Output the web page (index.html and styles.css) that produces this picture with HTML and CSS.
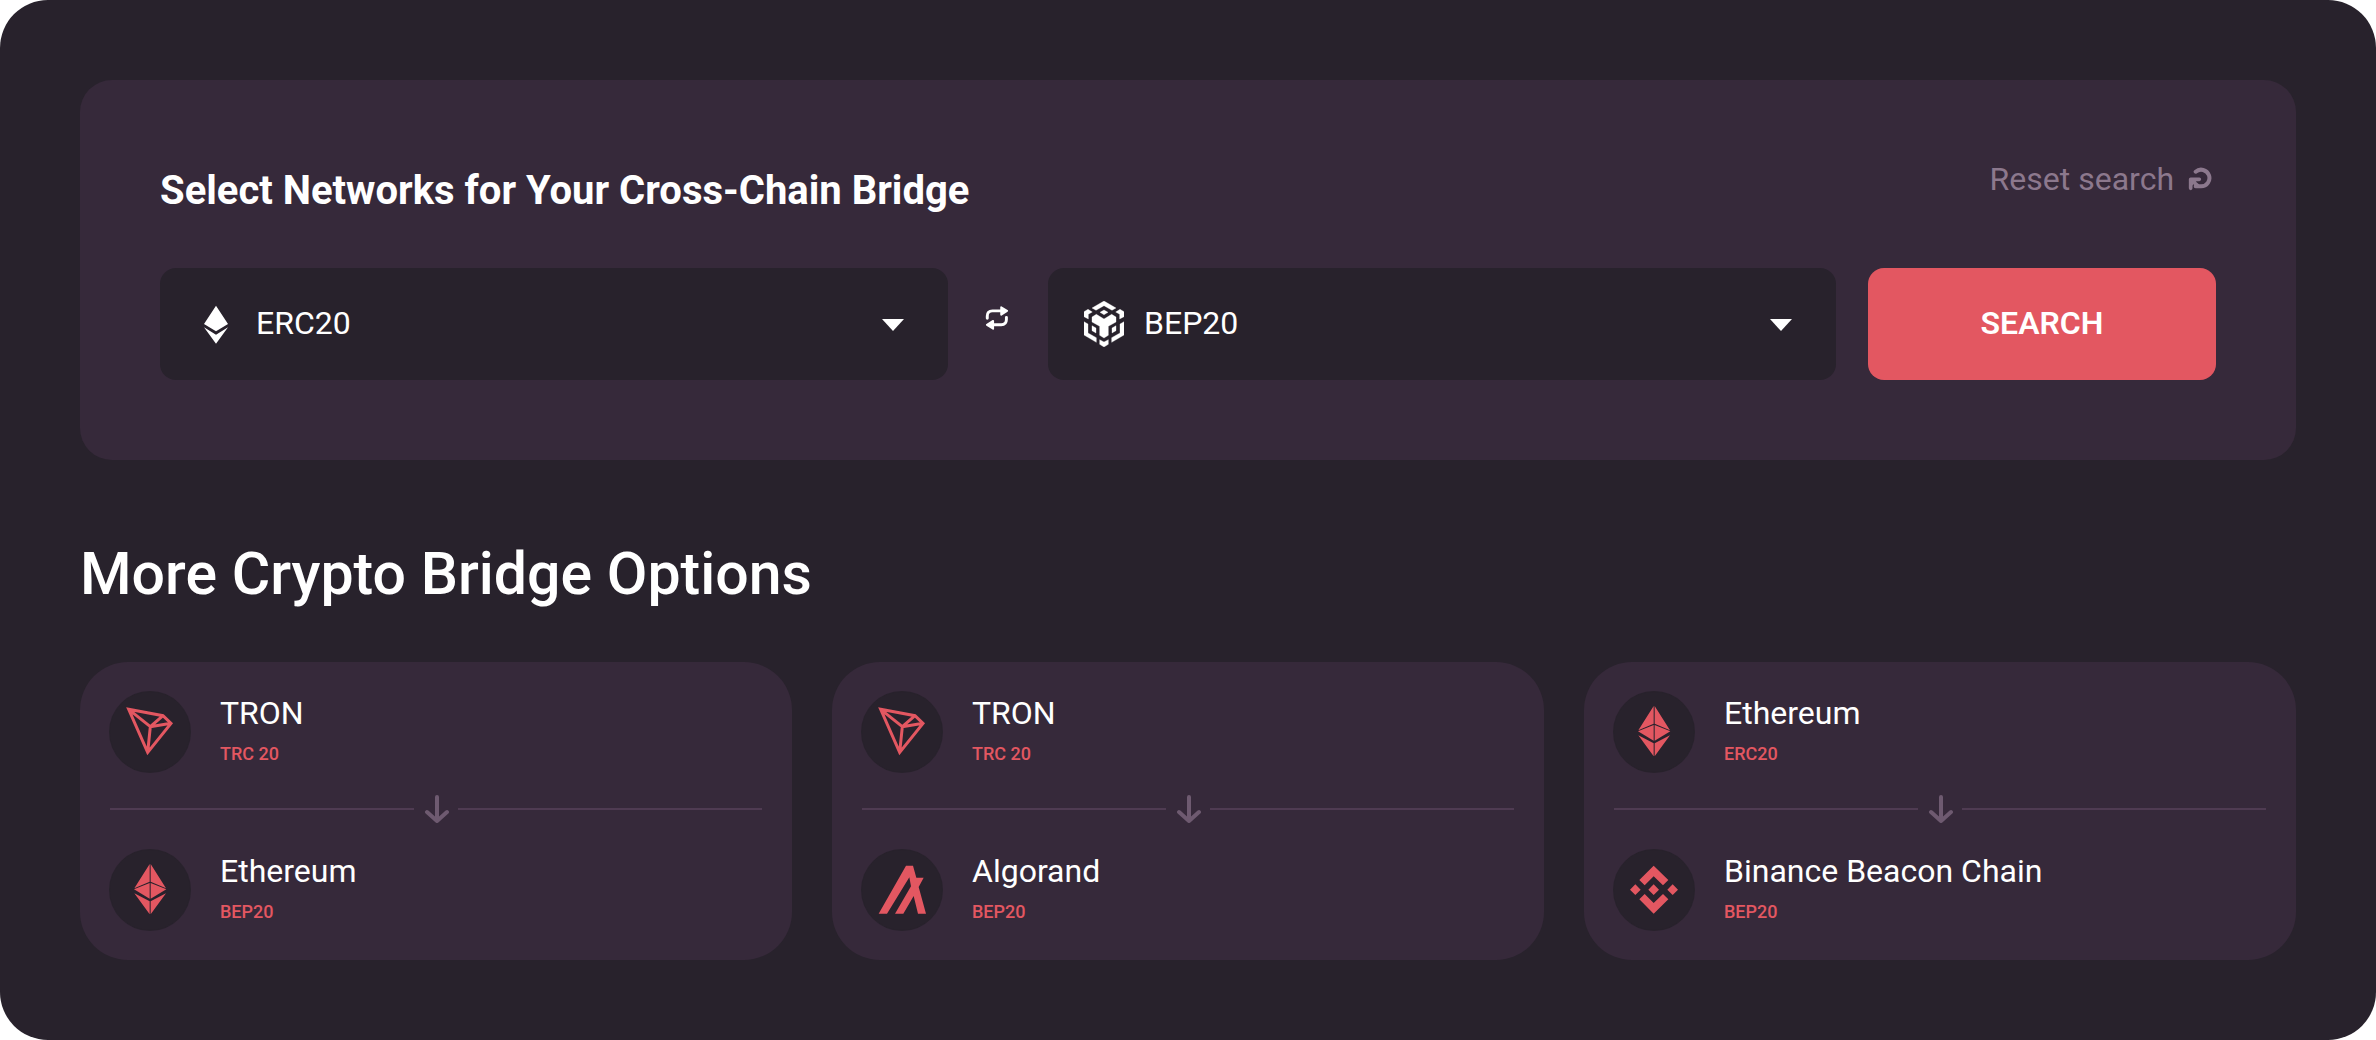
FILE: index.html
```html
<!DOCTYPE html>
<html lang="en">
<head>
<meta charset="utf-8">
<meta name="viewport" content="width=device-width, initial-scale=1">
<title>Cross-Chain Bridge</title>
<link rel="stylesheet" href="styles.css">
</head>
<body>
<svg class="sprite" aria-hidden="true">
  <symbol id="tron" viewBox="150 157 240 240">
    <path d="M206 209 309 228 333 251 263 338ZL271 261 263 338M271 261 333 251M271 261 309 228" fill="none" stroke="currentColor" stroke-width="9"/>
  </symbol>
  <symbol id="ethereum" viewBox="151 630 240 240">
    <path d="M270 672V725L224 745ZM270 729V776L223 748ZM270 784V823L224 760ZM273 672V725L319 745ZM273 729V776L320 748ZM273 784V823L319 760Z" fill="currentColor"/>
  </symbol>
  <symbol id="algorand" viewBox="96 571 240 240">
    <path d="M146 762 228 618H249L259 654H281L266 682 288 762H264L251 709 220 762H195L243 680 238 653 171 762Z" fill="currentColor"/>
  </symbol>
  <symbol id="binance" viewBox="102 61 240 240">
    <path d="M221 108 265 151 249 167 221 140 194 167 178 151ZM221 252 265 209 249 193 221 220 194 193 178 209ZM166 164 182 180 166 196 150 180ZM221 164 237 180 221 196 205 180ZM278 164 294 180 278 196 262 180Z" fill="currentColor"/>
  </symbol>
  <symbol id="arrow-down" viewBox="0 0 28 28">
    <path d="M15 2V26M5 17 15 26 25 17" fill="none" stroke="currentColor" stroke-width="4" stroke-linecap="round" stroke-linejoin="round"/>
  </symbol>
  <symbol id="caret" viewBox="0 0 22 12">
    <path d="M0 0H22L11 12Z" fill="currentColor"/>
  </symbol>
</svg>
<main class="page">
  <form class="panel">
    <div class="panel-head">
      <h1 class="panel-title">Select Networks for Your Cross-Chain Bridge</h1>
      <button class="reset" type="reset">Reset search
        <svg class="reset-icon" viewBox="681 87 72 72" aria-hidden="true">
          <path d="M704 101A25 25 0 1 1 720 145H704" fill="none" stroke="currentColor" stroke-width="12" stroke-linecap="round"/>
          <path d="M689 151V124H715M691 126 710 143" fill="none" stroke="currentColor" stroke-width="11" stroke-linecap="round" stroke-linejoin="round"/>
          <path d="M689 123H712L689 148Z" fill="currentColor"/>
        </svg>
      </button>
    </div>
    <div class="fields">
      <div class="field">
        <svg class="field-icon" viewBox="18 34 120 138" aria-hidden="true">
          <path d="M78 48 114 103 78 125 42 103ZM42 113 78 135 114 113 78 162Z" fill="currentColor"/>
        </svg>
        <select class="field-select" aria-label="From network">
          <option>ERC20</option>
          <option>BEP20</option>
          <option>TRC 20</option>
        </select>
        <svg class="field-caret" aria-hidden="true"><use href="#caret"/></svg>
      </div>
      <button class="swap" type="button" aria-label="Swap networks">
        <svg class="swap-icon" viewBox="376 47 72 74" aria-hidden="true">
          <path d="M382 85V78Q382 62 398 62H425M441 82V89Q441 105 425 105H400" fill="none" stroke="currentColor" stroke-width="9" stroke-linecap="round"/>
          <path d="M425 51 443 62 425 74ZM400 93 381 105 400 117Z" fill="currentColor" stroke="currentColor" stroke-width="6" stroke-linejoin="round"/>
        </svg>
      </button>
      <div class="field">
        <svg class="field-icon" viewBox="672 34 120 138" aria-hidden="true">
          <path d="M732 34 768 55 756 62 732 48 708 62 696 55ZM732 61 744 68 732 75 720 68ZM684 59 697 67 685 74V88L672 81V66ZM780 59 767 67 779 74V88L792 81V66ZM709 74 732 88 755 74 768 82V97L745 110V137L732 145 719 137V110L696 97V82ZM672 96 684 103V130L709 144V158L672 136ZM792 96 780 103V130L755 144V158L792 136ZM696 108 708 115V130L696 123ZM768 108 756 115V130L768 123ZM719 150 732 157 745 150V164L732 172 719 164Z" fill="currentColor" stroke="currentColor" stroke-width="1"/>
        </svg>
        <select class="field-select" aria-label="To network">
          <option>BEP20</option>
          <option>ERC20</option>
          <option>TRC 20</option>
        </select>
        <svg class="field-caret" aria-hidden="true"><use href="#caret"/></svg>
      </div>
      <button class="search" type="submit">SEARCH</button>
    </div>
  </form>

  <h2 class="section-title">More Crypto Bridge Options</h2>

  <div class="cards">
    <article class="card">
      <div class="network">
        <span class="badge"><svg class="badge-icon" aria-hidden="true"><use href="#tron"/></svg></span>
        <div class="label"><span class="name">TRON</span><span class="standard">TRC 20</span></div>
      </div>
      <div class="divider"><svg class="arrow" aria-hidden="true"><use href="#arrow-down"/></svg></div>
      <div class="network">
        <span class="badge"><svg class="badge-icon" aria-hidden="true"><use href="#ethereum"/></svg></span>
        <div class="label"><span class="name">Ethereum</span><span class="standard">BEP20</span></div>
      </div>
    </article>
    <article class="card">
      <div class="network">
        <span class="badge"><svg class="badge-icon" aria-hidden="true"><use href="#tron"/></svg></span>
        <div class="label"><span class="name">TRON</span><span class="standard">TRC 20</span></div>
      </div>
      <div class="divider"><svg class="arrow" aria-hidden="true"><use href="#arrow-down"/></svg></div>
      <div class="network">
        <span class="badge"><svg class="badge-icon" aria-hidden="true"><use href="#algorand"/></svg></span>
        <div class="label"><span class="name">Algorand</span><span class="standard">BEP20</span></div>
      </div>
    </article>
    <article class="card">
      <div class="network">
        <span class="badge"><svg class="badge-icon" aria-hidden="true"><use href="#ethereum"/></svg></span>
        <div class="label"><span class="name">Ethereum</span><span class="standard">ERC20</span></div>
      </div>
      <div class="divider"><svg class="arrow" aria-hidden="true"><use href="#arrow-down"/></svg></div>
      <div class="network">
        <span class="badge"><svg class="badge-icon" aria-hidden="true"><use href="#binance"/></svg></span>
        <div class="label"><span class="name">Binance Beacon Chain</span><span class="standard">BEP20</span></div>
      </div>
    </article>
  </div>
</main>
</body>
</html>
```
FILE: styles.css
```css
:root {
  --bg: #28222c;
  --panel: #36293a;
  --accent: #e35761;
  --muted: #8c788d;
  --line: #4f3b52;
  --arrow: #6e5a70;
}

* {
  box-sizing: border-box;
}

body {
  margin: 0;
  background: #fff;
  color: #fff;
  font-family: Roboto, "Liberation Sans", sans-serif;
  font-size: 32px;
}

button,
select {
  font: inherit;
  color: inherit;
  border: 0;
  margin: 0;
  cursor: pointer;
}

.sprite {
  display: none;
}

.page {
  padding: 80px;
  border-radius: 48px;
  background: var(--bg);
}

.panel {
  padding: 80px;
  border-radius: 32px;
  background: var(--panel);
}

.panel-head {
  display: flex;
  justify-content: space-between;
  align-items: flex-start;
  margin-bottom: 46px;
}

.panel-title {
  margin: 0;
  font-size: 40px;
  line-height: 62px;
  font-weight: 700;
}

.reset {
  display: flex;
  align-items: center;
  gap: 14px;
  padding: 0 4px;
  background: none;
  color: var(--muted);
  line-height: 38px;
}

.reset-icon {
  width: 24px;
  height: 24px;
}

.fields {
  display: grid;
  grid-template-columns: 1fr 100px 1fr 380px;
}

.field {
  display: grid;
  grid-template-columns: 96px 1fr 80px;
  align-items: center;
}

.field-select {
  grid-area: 1 / 1 / 2 / 4;
  width: 100%;
  height: 112px;
  padding: 0 80px 2px 96px;
  border-radius: 16px;
  background: var(--bg);
  appearance: none;
}

.field-icon,
.field-caret {
  z-index: 1;
  pointer-events: none;
}

.field-icon {
  grid-area: 1 / 1;
  width: 40px;
  height: 46px;
  margin-left: 36px;
}

.field-caret {
  grid-area: 1 / 3;
  width: 22px;
  height: 12px;
  margin: 2px 0 0 14px;
}

.swap {
  display: grid;
  place-items: center;
  height: 100px;
  padding: 0 2px 0 0;
  background: none;
}

.swap-icon {
  width: 24px;
  height: 24px;
}

.search {
  margin-left: 32px;
  padding: 0 0 2px;
  border-radius: 16px;
  background: var(--accent);
  font-weight: 600;
}

.section-title {
  margin: 80px 0 54px;
  font-size: 59px;
  line-height: 68px;
  font-weight: 500;
}

.cards {
  display: grid;
  grid-template-columns: repeat(3, 1fr);
  gap: 40px;
}

.card {
  padding: 30px;
  border-radius: 48px;
  background: var(--panel);
}

.network {
  display: flex;
  gap: 30px;
}

.badge {
  flex: none;
  width: 80px;
  height: 80px;
  border-radius: 50%;
  background: var(--bg);
  box-shadow: 0 0 0 1px var(--bg);
  color: var(--accent);
}

.badge-icon {
  display: block;
  width: 80px;
  height: 80px;
}

.label {
  display: flex;
  flex-direction: column;
  gap: 6px;
}

.name {
  line-height: 42px;
}

.standard {
  color: var(--accent);
  font-size: 18px;
  line-height: 28px;
  font-weight: 500;
}

.divider {
  display: flex;
  align-items: center;
  gap: 8px;
  margin: 23px 0 27px;
  color: var(--arrow);
}

.divider::before,
.divider::after {
  content: "";
  flex: 1;
  height: 2px;
  background: var(--line);
}

.arrow {
  width: 28px;
  height: 28px;
}
```
